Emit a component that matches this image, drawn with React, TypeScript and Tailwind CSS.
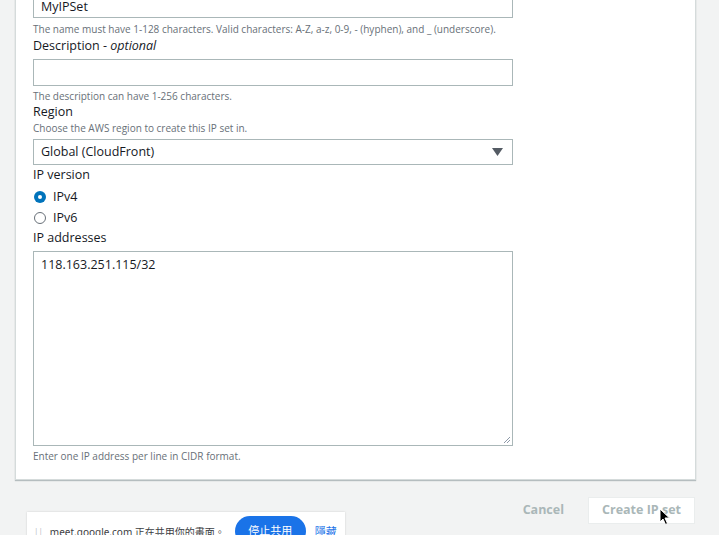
function Label({ children }: { children: React.ReactNode }) {
  return <div className="text-[12.5px] leading-[16px] text-[#16191f]">{children}</div>;
}

function Hint({ children, className = "" }: { children: React.ReactNode; className?: string }) {
  return <div className={`text-[10px] leading-[14px] text-[#687078] ${className}`}>{children}</div>;
}

export default function App() {
  return (
    <div className="relative h-[535px] w-[719px] overflow-hidden bg-[#f2f3f3] font-['Open_Sans',sans-serif]">
      <div className="ml-[15px] mr-[23px] -mt-[9px] border border-[#d5dbdb] bg-white px-[17px] pb-[16px] shadow-[0_1px_1px_rgba(0,28,36,0.25)]">
        <div className="flex h-[26px] w-[480px] items-center border border-[#aab7b8] px-[7px] pt-[4px] text-[12.5px] text-[#16191f]">
          MyIPSet
        </div>
        <Hint className="mt-[4px]">
          The name must have 1-128 characters. Valid characters: A-Z, a-z, 0-9, - (hyphen), and _ (underscore).
        </Hint>
        <div className="mt-[2px]">
          <Label>
            Description - <span className="italic">optional</span>
          </Label>
        </div>
        <div className="mt-[5px] h-[27px] w-[480px] border border-[#aab7b8]" />
        <Hint className="mt-[3px]">The description can have 1-256 characters.</Hint>
        <div className="mt-[1px]">
          <Label>Region</Label>
        </div>
        <Hint className="mt-[1px]">Choose the AWS region to create this IP set in.</Hint>
        <div className="mt-[4px] flex h-[26px] w-[480px] items-center justify-between border border-[#aab7b8] pl-[7px] pr-[9px] text-[12.5px] text-[#16191f]">
          <span>Global (CloudFront)</span>
          <svg width="11" height="8" viewBox="0 0 11 8">
            <path d="M0 0 H11 L5.5 8 Z" fill="#545b64" />
          </svg>
        </div>
        <div className="mt-[2px]">
          <Label>IP version</Label>
        </div>
        <div className="mt-[4px] flex h-[20px] items-center gap-[7px] text-[12.5px] text-[#16191f]">
          <span className="ml-[1px] flex h-[12px] w-[12px] items-center justify-center rounded-full bg-[#0073bb]">
            <span className="h-[4px] w-[4px] rounded-full bg-white" />
          </span>
          IPv4
        </div>
        <div className="mt-[1px] flex h-[20px] items-center gap-[7px] text-[12.5px] text-[#16191f]">
          <span className="ml-[1px] h-[12px] w-[12px] rounded-full border border-[#687078]" />
          IPv6
        </div>
        <div className="mt-[2px]">
          <Label>IP addresses</Label>
        </div>
        <div className="relative mt-[5px] h-[195px] w-[480px] border border-[#aab7b8] px-[7px] pt-[4px] text-[12.5px] leading-[18px] text-[#16191f]">
          118.163.251.115/32
          <svg className="absolute bottom-[1px] right-[1px]" width="8" height="8" viewBox="0 0 8 8">
            <path d="M7 1 L1 7 M7 4 L4 7" stroke="#8d99a8" strokeWidth="1" />
          </svg>
        </div>
        <Hint className="mt-[3px]">Enter one IP address per line in CIDR format.</Hint>
      </div>

      <div className="mr-[24px] mt-[17px] flex items-center justify-end gap-[24px]">
        <span className="text-[12.5px] font-bold text-[#aab7b8]">Cancel</span>
        <div className="flex h-[27px] w-[107px] items-center justify-center border border-[#eaeded] bg-white text-[12.5px] font-bold text-[#aab7b8]">
          Create IP set
        </div>
      </div>

      {/* screen-share bar floating over the page */}
      <div className="absolute left-[27px] top-[512px] flex h-[40px] w-[318px] items-start bg-white pl-[7px] pt-[4px] font-['Noto_Sans','Noto_Sans_CJK_TC',sans-serif] shadow-[0_0_2px_rgba(0,0,0,0.15)]">
        <span className="mt-[11px] text-[8px] leading-[10px] text-[#bdc1c6]">||</span>
        <span className="ml-[7px] mt-[9px] whitespace-nowrap text-[10px] leading-[14px] text-[#3c4043]">
          meet.google.com 正在共用你的畫面。
        </span>
        <span className="ml-[10px] flex h-[30px] w-[71px] items-center justify-center rounded-full bg-[#1a73e8] text-[11px] text-white">
          停止共用
        </span>
        <span className="ml-[9px] mt-[9px] text-[11px] leading-[14px] text-[#1a73e8]">隱藏</span>
      </div>

      <svg className="absolute left-[659px] top-[508px]" width="12" height="18" viewBox="0 0 12 18">
        <path d="M1 1 L1 14 L4 11 L6.5 16.5 L8.5 15.5 L6 10 L10.5 10 Z" fill="#000" stroke="#fff" strokeWidth="1" />
      </svg>
    </div>
  );
}
